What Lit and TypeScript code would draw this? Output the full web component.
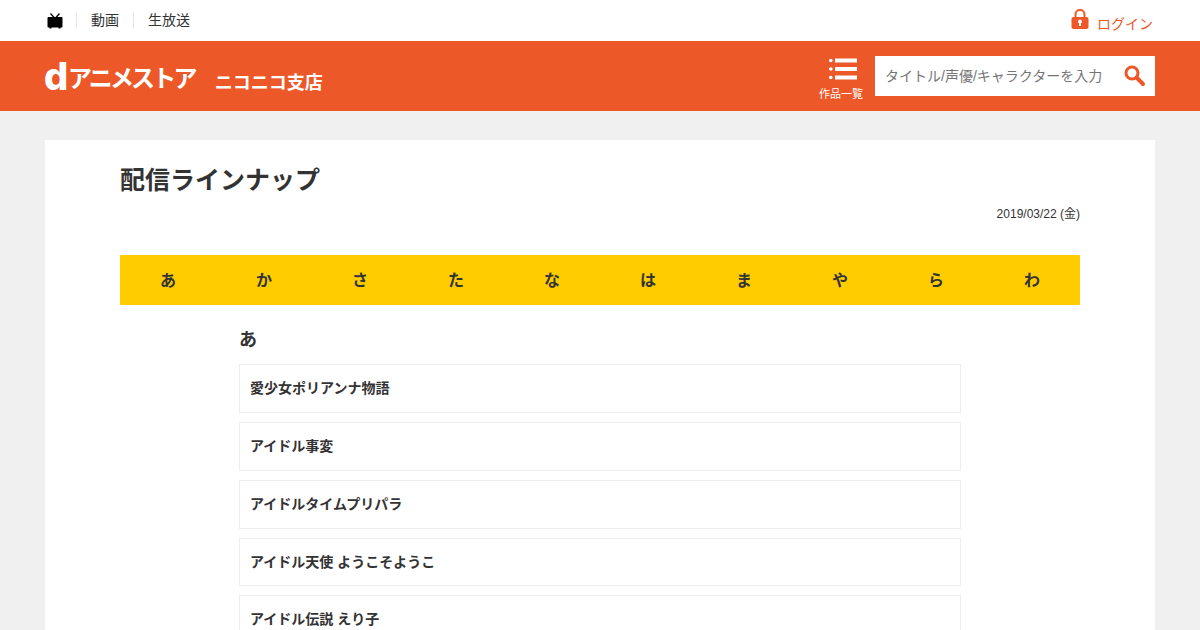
import { LitElement, html, css, svg } from 'lit';
import { customElement } from 'lit/decorators.js';

const KANA = ['あ', 'か', 'さ', 'た', 'な', 'は', 'ま', 'や', 'ら', 'わ'];

const TITLES = [
  '愛少女ポリアンナ物語',
  'アイドル事変',
  'アイドルタイムプリパラ',
  'アイドル天使 ようこそようこ',
  'アイドル伝説 えり子',
];

const tvIcon = svg`<svg width="16" height="16" viewBox="0 0 16 16">
  <path d="M3.5 0.5l4 4.5M12.5 0.5l-4 4.5" stroke="#000" stroke-width="1.3" fill="none" />
  <path d="M1.5 4h13a1 1 0 0 1 1 1v8.500a1 1 0 0 1-1 1h-1v1h-2v-1h-7v1h-2v-1h-1a1 1 0 0 1-1-1V5a1 1 0 0 1 1-1z" fill="#000" />
</svg>`;

const lockIcon = svg`<svg width="18" height="20" viewBox="0 0 18 20">
  <path d="M4.500 9V5.200a4.500 4.200 0 0 1 9 0V9" stroke="#ed5829" stroke-width="2" fill="none" />
  <rect x="0.500" y="8" width="17" height="12" rx="2" fill="#ed5829" />
  <circle cx="9" cy="12.500" r="2" fill="#fff" />
  <rect x="8" y="13" width="2" height="4" fill="#fff" />
</svg>`;

const listIcon = svg`<svg width="28" height="22" viewBox="0 0 28 22">
  <g fill="#fff">
    <circle cx="1.800" cy="2.500" r="1.800" /><rect x="6" y="0.500" width="22" height="4" />
    <circle cx="1.800" cy="11" r="1.800" /><rect x="6" y="9" width="22" height="4" />
    <circle cx="1.800" cy="19.500" r="1.800" /><rect x="6" y="17.500" width="22" height="4" />
  </g>
</svg>`;

const searchIcon = svg`<svg width="22" height="22" viewBox="0 0 22 22">
  <circle cx="8" cy="8" r="6" stroke="#ed5829" stroke-width="3" fill="none" />
  <path d="M12.500 12.500l6.500 6.500" stroke="#ed5829" stroke-width="4" stroke-linecap="round" />
</svg>`;

@customElement('app-root')
export class AppRoot extends LitElement {
  static styles = css`
    :host {
      display: block;
      height: 630px;
      overflow: hidden;
      background: #f0f0f0;
      color: #333;
      font-family: 'Liberation Sans', 'Noto Sans CJK JP', sans-serif;
    }

    .topbar {
      display: flex;
      align-items: center;
      height: 41px;
      padding: 0 47px 0 46px;
      background: #fff;
    }

    .tv {
      display: flex;
      width: 30px;
      margin-left: 1px;
      margin-right: -1px;
    }

    .topbar a {
      padding: 0 14px;
      border-left: 1px solid #e5e5e5;
      font-size: 14px;
      line-height: 15px;
    }

    .login {
      display: flex;
      align-items: flex-start;
      gap: 8px;
      margin-left: auto;
      margin-top: 1px;
      color: #ed5829;
      font-size: 14px;
      line-height: 18px;
    }

    .login span {
      margin-top: 6px;
    }

    .header {
      display: flex;
      align-items: center;
      height: 70px;
      padding: 0 45px;
      background: #ed5829;
      color: #fff;
    }

    .logo-d {
      width: 24px;
      margin-left: -1px;
      font-family: Inter, 'Liberation Sans', sans-serif;
      font-size: 38px;
      font-weight: 800;
      line-height: 46px;
    }

    .logo-name {
      font-size: 24px;
      font-weight: 700;
      letter-spacing: -2.800px;
    }

    .logo-branch {
      margin-left: 20px;
      margin-top: 10px;
      font-size: 18px;
      font-weight: 700;
    }

    .catalog {
      display: flex;
      flex-direction: column;
      align-items: center;
      gap: 7px;
      margin-left: auto;
      margin-right: 12px;
      margin-top: 7px;
      font-size: 11px;
      line-height: 14px;
    }

    .catalog svg {
      margin-left: 4px;
    }

    .search {
      display: flex;
      align-items: center;
      width: 280px;
      height: 40px;
      padding: 0 9px 0 10px;
      box-sizing: border-box;
      background: #fff;
    }

    .search input {
      flex: 1;
      min-width: 0;
      padding: 0;
      border: 0;
      outline: 0;
      font: inherit;
      font-size: 14px;
    }

    .search input::placeholder {
      color: #757575;
    }

    .card {
      margin: 29px 45px 0;
      padding: 22px 75px 0;
      background: #fff;
    }

    h1 {
      margin: 0;
      font-size: 25px;
      line-height: 36px;
    }

    .date {
      margin-top: 8px;
      font-size: 12px;
      line-height: 16px;
      text-align: right;
    }

    .kana {
      display: grid;
      grid-template-columns: repeat(10, 1fr);
      height: 50px;
      margin-top: 33px;
      background: #fc0;
      color: #333;
      font-size: 16px;
      font-weight: 700;
    }

    .kana span {
      display: flex;
      align-items: center;
      justify-content: center;
      padding-bottom: 2px;
    }

    .list {
      margin: 0 119px;
    }

    h2 {
      margin: 0;
      padding: 23px 0 11.200px 0;
      font-size: 18px;
      line-height: 25px;
    }

    .item {
      display: flex;
      align-items: center;
      height: 48.800px;
      margin-bottom: 9px;
      padding: 0 10px 2.800px;
      box-sizing: border-box;
      border: 1px solid #eee;
      font-size: 14px;
      font-weight: 700;
    }
  `;

  render() {
    return html`
      <div class="topbar">
        <span class="tv">${tvIcon}</span>
        <a>動画</a>
        <a>生放送</a>
        <span class="login">${lockIcon}<span>ログイン</span></span>
      </div>
      <header class="header">
        <span class="logo-d">d</span>
        <span class="logo-name">アニメストア</span>
        <span class="logo-branch">ニコニコ支店</span>
        <span class="catalog">${listIcon}<span>作品一覧</span></span>
        <div class="search">
          <input placeholder="タイトル/声優/キャラクターを入力" />
          ${searchIcon}
        </div>
      </header>
      <main class="card">
        <h1>配信ラインナップ</h1>
        <div class="date">2019/03/22 (金)</div>
        <nav class="kana">${KANA.map((k) => html`<span>${k}</span>`)}</nav>
        <section class="list">
          <h2>あ</h2>
          ${TITLES.map((t) => html`<div class="item">${t}</div>`)}
        </section>
      </main>
    `;
  }
}

declare global {
  interface HTMLElementTagNameMap {
    'app-root': AppRoot;
  }
}
